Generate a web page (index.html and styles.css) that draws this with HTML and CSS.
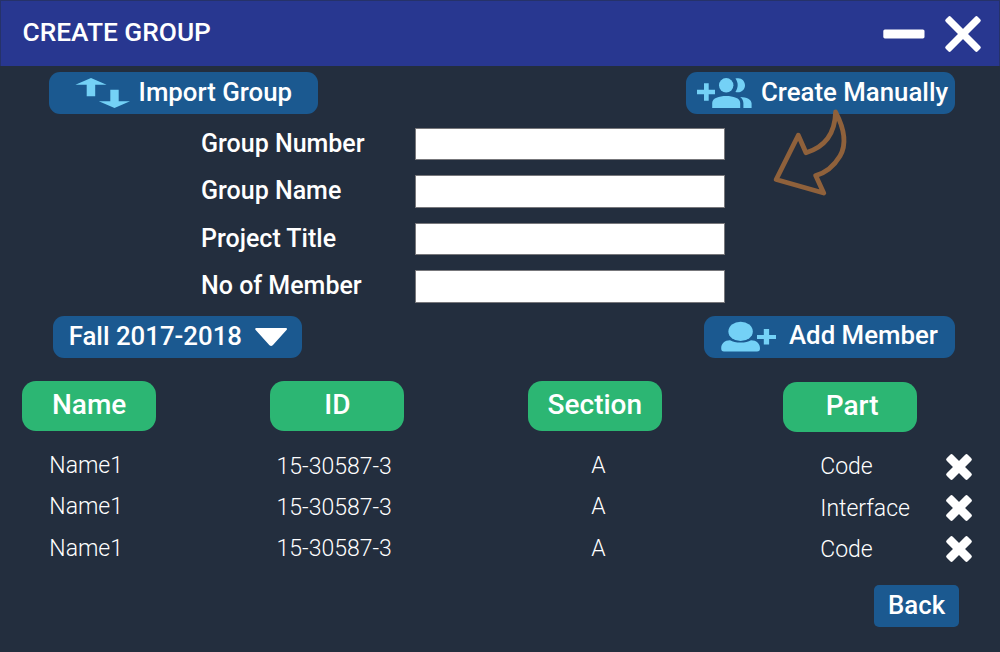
FILE: index.html
```html
<!DOCTYPE html>
<html lang="en">
<head>
<meta charset="utf-8">
<title>Create Group</title>
<link rel="stylesheet" href="styles.css">
</head>
<body>
<div class="window">
  <header class="titlebar">
    <h1 class="title">CREATE GROUP</h1>
    <div class="controls">
      <svg class="minimize" width="42" height="10" viewBox="0 0 42 10"><rect x="0.3" y="0.4" width="41.2" height="9" rx="1.6" fill="#fff"/></svg>
      <svg class="close" width="38" height="38" viewBox="0 0 38 38"><g fill="#fff" transform="rotate(45 19 19)"><rect x="-3.6" y="15.4" width="45.2" height="7.2" rx="1.8"/><rect x="15.4" y="-3.6" width="7.2" height="45.2" rx="1.8"/></g></svg>
    </div>
  </header>

  <div class="toolbar">
    <button class="btn import">
      <svg width="56" height="32" viewBox="0 0 56 32" fill="#74d1f6"><path d="M16 1 31.600 7.800H20.200V19.300H11.700V7.800H.4Z"/><path d="M39.500 31 55 24.200H43.700V12.700H35.300V24.200H23.800Z"/></svg>
      <span>Import Group</span>
    </button>
    <button class="btn manual">
      <svg width="56" height="32" viewBox="0 0 56 32" fill="#74d1f6"><path d="M8 6.300h4.700v6.500H19v4.400h-6.300v6.500H8v-6.500H1v-4.400h7Z"/><circle cx="30.200" cy="8.300" r="7.200"/><path d="M16.200 31v-5c0-5 7-7 14-7s14 2 14 7v5Z"/><path d="M39.400 1.600c5.400-1.800 9.600 2 9.600 6.700s-4.400 8.400-9.600 6.600c3-4 3-9.400 0-13.300Z"/><path d="M44.200 19.900c6.500.2 11.400 2.200 11.400 6.700V31h-8.200v-4.700c0-2.800-1.200-4.800-3.200-6.400Z"/></svg>
      <span>Create Manually</span>
    </button>
    <svg class="hint-arrow" width="90" height="95" viewBox="0 0 90 95" fill="none" stroke="#8f613b" stroke-width="4.800" stroke-linejoin="round"><path d="M70.600 7C80 25 82 39 75 51 69 61 60 68 50.700 70.600L58.700 88 11.200 74.500 33.300 30.200 41 47.700C60 42 70 29 70.600 7Z"/></svg>
  </div>

  <form class="form">
    <label class="field"><span>Group Number</span><input type="text"></label>
    <label class="field"><span>Group Name</span><input type="text"></label>
    <label class="field"><span>Project Title</span><input type="text"></label>
    <label class="field"><span>No of Member</span><input type="text"></label>
  </form>

  <div class="filters">
    <button class="btn term">
      <span>Fall 2017-2018</span>
      <svg width="34" height="20" viewBox="0 0 34 20" fill="#fff" stroke="#fff" stroke-width="2" stroke-linejoin="round"><path d="M2.200 2H32L18 17.500Q17.100 18.300 16.200 17.500Z"/></svg>
    </button>
    <button class="btn add">
      <svg width="56" height="32" viewBox="0 0 56 32" fill="#74d1f6"><ellipse cx="19.600" cy="10.400" rx="12.200" ry="9.700"/><path d="M9 19.200c2.800 1.700 6 2.400 10.600 2.400s7.700-.7 10.400-2.400c5.500 0 9 3.500 9 8 0 2.400-.8 3.300-3 3.300H3C1 30.500.2 29.600.2 27.200c0-4.500 3.500-8 8.800-8Z"/><path d="M42.800 8h5.300v6H55v4h-6.900v5.600h-5.300V18H36v-4h6.800Z"/></svg>
      <span>Add Member</span>
    </button>
  </div>

  <main class="members">
    <section class="column names">
      <h2>Name</h2>
      <p>Name1</p><p>Name1</p><p>Name1</p>
    </section>
    <section class="column ids">
      <h2>ID</h2>
      <p>15-30587-3</p><p>15-30587-3</p><p>15-30587-3</p>
    </section>
    <section class="column sections">
      <h2>Section</h2>
      <p>A</p><p>A</p><p>A</p>
    </section>
    <section class="column parts">
      <h2>Part</h2>
      <p>Code</p><p>Interface</p><p>Code</p>
    </section>
    <div class="removals">
      <svg viewBox="0 0 26 26"><g fill="#fff" transform="rotate(45 13 13)"><rect x="-1.900" y="8.700" width="29.800" height="8.600" rx="1.800"/><rect x="8.700" y="-1.900" width="8.600" height="29.800" rx="1.800"/></g></svg>
      <svg viewBox="0 0 26 26"><g fill="#fff" transform="rotate(45 13 13)"><rect x="-1.900" y="8.700" width="29.800" height="8.600" rx="1.800"/><rect x="8.700" y="-1.900" width="8.600" height="29.800" rx="1.800"/></g></svg>
      <svg viewBox="0 0 26 26"><g fill="#fff" transform="rotate(45 13 13)"><rect x="-1.900" y="8.700" width="29.800" height="8.600" rx="1.800"/><rect x="8.700" y="-1.900" width="8.600" height="29.800" rx="1.800"/></g></svg>
    </div>
  </main>

  <footer class="footer"><button class="btn back"><span>Back</span></button></footer>
</div>
</body>
</html>
```
FILE: styles.css
```css
* { box-sizing: border-box; margin: 0; }
body { background: #232e3e; color: #fff; font-family: Roboto, "Liberation Sans", sans-serif; overflow: hidden; }
svg { display: block; flex: none; overflow: visible; }
.window { width: 1000px; height: 652px; display: flex; flex-direction: column; }

.titlebar { height: 66px; flex: none; display: flex; justify-content: space-between; background: #283790; border: 1px solid #263269; border-bottom: 0; padding-left: 21.500px; }
.title { font-size: 26.300px; font-weight: 500; line-height: 63px; }
.controls { display: flex; gap: 19px; padding: 14px 17px 0 0; }
.minimize { margin-top: 14px; }

.btn { height: 41.600px; flex: none; display: flex; align-items: flex-start; border: 0; border-radius: 11px; background: #1b5990; color: #fff; padding: 0; font: 500 25.800px/40px Roboto, "Liberation Sans", sans-serif; white-space: nowrap; }
.btn svg { margin-top: 5px; }
.toolbar { position: relative; height: 56px; flex: none; display: flex; justify-content: space-between; align-items: flex-start; padding: 6px 44.700px 0 49px; }
.import { width: 269.300px; padding-left: 25.600px; gap: 8px; }
.manual { width: 269.300px; padding-left: 10px; gap: 9px; }
.hint-arrow { position: absolute; left: 765px; top: 39px; }

.form { height: 188.500px; flex: none; padding: 5.800px 0 0 201px; }
.field { height: 47.450px; display: flex; font-size: 25px; font-weight: 500; line-height: 31px; }
.field span { width: 213.500px; white-space: nowrap; }
.field input { width: 310px; height: 32.700px; border: 1px solid #77777b; background: #fff; border-radius: 0; padding: 0 8px; outline: 0; }

.filters { height: 70px; flex: none; display: flex; justify-content: space-between; align-items: flex-start; padding: 5.800px 44.700px 0 52.700px; }
.filters .btn { line-height: 38px; }
.filters .term { line-height: 40px; }
.term { width: 249.300px; padding-left: 16px; gap: 11.500px; }
.term svg { margin-top: 10.500px; }
.add { width: 251.300px; padding-left: 17px; gap: 12px; }

.members { height: 204px; flex: none; display: flex; padding-left: 22.300px; }
.column { width: 133.700px; font-size: 23px; font-weight: 300; }
.column h2 { height: 50px; border-radius: 14px; background: #2cb673; font-size: 28px; font-weight: 500; line-height: 47px; text-align: center; margin-bottom: 14.300px; }
.column p { height: 41.400px; line-height: 41.400px; white-space: nowrap; }
.names p { padding-left: 27px; }
.ids { margin-left: 114.500px; padding-top: .8px; }
.ids p { padding-left: 6.100px; }
.sections { margin-left: 123.800px; }
.sections p { padding-left: 63.400px; }
.parts { margin-left: 121.600px; padding-top: 1.500px; }
.parts h2 { padding-left: 4px; }
.parts p { padding-left: 37px; }
.removals { display: flex; flex-direction: column; gap: 15.300px; padding: 73px 0 0 29.500px; }
.removals svg { width: 26px; height: 26px; }

.footer { display: flex; justify-content: flex-end; padding-right: 41px; }
.back { width: 85px; height: 42px; border-radius: 5px; padding-left: 14px; }
```
